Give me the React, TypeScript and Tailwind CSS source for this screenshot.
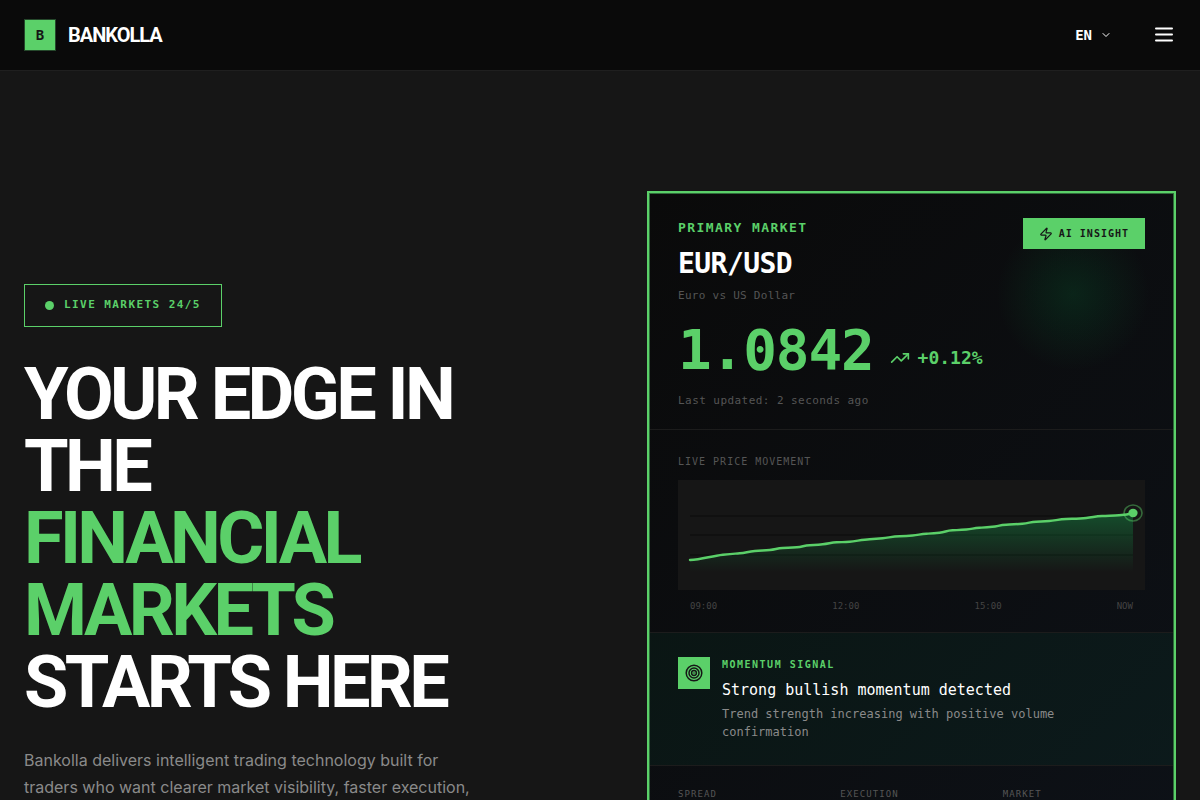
import { ChevronDown, TrendingUp, Zap } from 'lucide-react';

const gridLines = [36, 55, 75];
const times = ['09:00', '12:00', '15:00', 'NOW'];
const stats = ['SPREAD', 'EXECUTION', 'MARKET'];

const linePath =
  'M12 80 C24 79.5 33 76 45 74.7 S56 73.8 62 73.3 S70 71.6 77 71 S86 70.6 92 70 S99 68.3 105 68 S113 67.8 119 67.3 S126 65.6 132 65.3 S139 64.8 145 64.3 S153 62.6 159 62.3 S166 62.2 172 61.7 S185 59.7 192 59.3 S199 58.9 205 58.3 S215 56.4 222 56.2 S229 56 235 55.5 S243 54 249 53.7 S256 53.4 262 52.7 S269 50.6 275 50.3 S283 50 289 49.5 S296 48 302 47.7 S309 47.4 315 46.8 S322 45 329 44.7 S338 44.4 345 43.7 S353 42 359 41.7 S366 41.5 372 41 S382 39.3 389 39 S402 38.7 409 38 S418 36.3 425 36 S437 35.6 442 35.3 S451 34.6 456 33';

const Header = () => {
  return (
    <header className="border-b border-[#1f1f1f] bg-[#0a0a0a]">
      <div className="flex h-[70px] items-center justify-between px-6">
        <a href="#" className="flex items-center gap-3">
          <span className="flex h-8 w-8 items-center justify-center border border-[#25482b] bg-[#5bd069] font-['DejaVu_Sans_Mono',monospace] text-sm font-bold text-[#161616]">
            B
          </span>
          <span className="font-[Roboto,sans-serif] text-xl font-bold tracking-tighter text-white">BANKOLLA</span>
        </a>

        <div className="flex items-center gap-10">
          <button
            type="button"
            className="flex items-center gap-2 font-['DejaVu_Sans_Mono',monospace] text-sm font-bold text-white"
          >
            EN
            <ChevronDown className="h-3 w-3" />
          </button>
          <button type="button" aria-label="Open menu">
            <svg viewBox="0 0 24 24" className="h-6 w-6" stroke="#ffffff" strokeWidth="2" strokeLinecap="round">
              <path d="M4 5.5h16M4 11.5h16M4 17.5h16" />
            </svg>
          </button>
        </div>
      </div>
    </header>
  );
};

const PriceChart = () => {
  return (
    <svg viewBox="0 0 468 110" preserveAspectRatio="none" className="mt-2.5 block h-[110px] w-full bg-[#161616]">
      <defs>
        <linearGradient id="area" gradientUnits="userSpaceOnUse" x1="0" y1="33" x2="0" y2="92">
          <stop offset="0" stopColor="#12c25a" stopOpacity="0.32" />
          <stop offset="1" stopColor="#12c25a" stopOpacity="0" />
        </linearGradient>
      </defs>
      {gridLines.map((y) => (
        <line key={y} x1="12" x2="456" y1={y} y2={y} stroke="#0a0a0a" strokeOpacity="0.5" strokeWidth="1.5" />
      ))}
      <path d={`${linePath} V92 H12 Z`} fill="url(#area)" />
      <path d={linePath} fill="none" stroke="#5bd069" strokeWidth="2.4" strokeLinecap="round" />
      <ellipse cx="456" cy="33" rx="4.6" ry="4.2" fill="#5bd069" />
      <ellipse cx="456" cy="33" rx="9" ry="8" fill="none" stroke="#5bd069" strokeOpacity="0.45" strokeWidth="1.6" />
    </svg>
  );
};

const MarketCard = () => {
  return (
    <section className="border-2 border-[#5bd069] bg-[#2f6b3a] p-px font-['DejaVu_Sans_Mono',monospace]">
      <div className="bg-linear-135 from-[#0a0a0a] to-[#0d1117]">
        {/* Quote */}
        <div className="relative border-b border-[#1c1c1c] px-7 pt-6 pb-5">
          <div className="absolute top-0 right-0 h-[200px] w-[200px] bg-[radial-gradient(circle,rgba(0,200,90,0.12)_0%,transparent_54%)]" />
          <div className="relative flex items-start justify-between">
            <div>
              <p className="text-[13px] leading-5 font-bold tracking-[0.11em] text-[#5bd069]">PRIMARY MARKET</p>
              <h2 className="mt-2 text-[28px] leading-9 font-bold tracking-[-0.02em] text-white">EUR/USD</h2>
              <p className="mt-1.5 text-[11px] leading-4 tracking-wide text-[#555555]">Euro vs US Dollar</p>
            </div>
            <button
              type="button"
              className="flex h-[31px] items-center gap-1.5 bg-[#5bd069] px-4 text-[10px] font-bold tracking-widest text-[#161616]"
            >
              <Zap className="h-3.5 w-3.5" strokeWidth={2} />
              AI INSIGHT
            </button>
          </div>
          <div className="relative mt-[18px] flex items-center gap-4">
            <span className="text-[56px] leading-14 font-bold tracking-[-0.02em] text-[#5bd069]">1.0842</span>
            <span className="flex items-center gap-2 pt-4 text-lg leading-6 font-bold text-[#5bd069]">
              <TrendingUp className="h-5 w-5" />
              +0.12%
            </span>
          </div>
          <p className="relative mt-[15px] text-[11px] leading-4 tracking-[0.04em] text-[#555555]">
            Last updated: 2 seconds ago
          </p>
        </div>

        {/* Chart */}
        <div className="border-b border-[#1c1c1c] px-7 pt-6 pb-[18px]">
          <h3 className="text-[10px] leading-4 tracking-widest text-[#555555]">LIVE PRICE MOVEMENT</h3>
          <PriceChart />
          <div className="mt-2 flex justify-between px-3 text-[9px] leading-4 text-[#444444]">
            {times.map((time) => (
              <span key={time}>{time}</span>
            ))}
          </div>
        </div>

        {/* Signal */}
        <div className="flex items-start gap-3 border-b border-[#1c1c1c] bg-[#00c878]/5 px-7 py-6">
          <div className="flex h-8 w-8 shrink-0 items-center justify-center bg-[#5bd069]">
            <svg viewBox="0 0 18 18" className="h-[18px] w-[18px]" fill="none" stroke="#161616" strokeWidth="1.5">
              <circle cx="9" cy="9" r="7.8" />
              <circle cx="9" cy="9" r="5" />
              <circle cx="9" cy="9" r="2.4" />
              <circle cx="9" cy="9" r="0.7" fill="#161616" stroke="none" />
            </svg>
          </div>
          <div>
            <p className="text-[10px] leading-4 font-bold tracking-[0.15em] text-[#5bd069]">MOMENTUM SIGNAL</p>
            <h3 className="mt-1.5 text-[15px] leading-[22px] text-white">Strong bullish momentum detected</h3>
            <p className="mt-1 text-xs leading-[18px] text-[#8a8a8a]">
              Trend strength increasing with positive volume confirmation
            </p>
          </div>
        </div>

        {/* Stats */}
        <div className="grid grid-cols-3 gap-5 px-7 pt-5 pb-10 text-[9px] leading-4 tracking-[0.12em] text-[#555555]">
          {stats.map((stat) => (
            <span key={stat}>{stat}</span>
          ))}
        </div>
      </div>
    </section>
  );
};

const App = () => {
  return (
    <div className="h-screen overflow-hidden bg-[#161616] font-[Inter,sans-serif]">
      <Header />
      <main className="grid grid-cols-2 items-start gap-[94px] px-6 pt-[120px]">
        <div className="pt-[93px]">
          <div className="flex h-[43px] w-fit items-center gap-2.5 border border-[#5bd069] px-5 font-['DejaVu_Sans_Mono',monospace] text-[11px] font-bold tracking-[0.13em] text-[#5bd069]">
            <span className="h-[9px] w-[9px] rounded-full bg-[#5bd069]" />
            LIVE MARKETS 24/5
          </div>
          <h1 className="mt-8 font-[Roboto,sans-serif] text-7xl leading-none font-bold tracking-tighter text-white">
            YOUR EDGE IN THE
            <span className="block text-[#5bd069]">FINANCIAL MARKETS</span>
            STARTS HERE
          </h1>
          <p className="mt-7 max-w-[470px] text-base leading-[27px] text-[#8a8a8a]">
            Bankolla delivers intelligent trading technology built for traders who want clearer market visibility,
            faster execution,
          </p>
        </div>
        <MarketCard />
      </main>
    </div>
  );
};

export default App;
